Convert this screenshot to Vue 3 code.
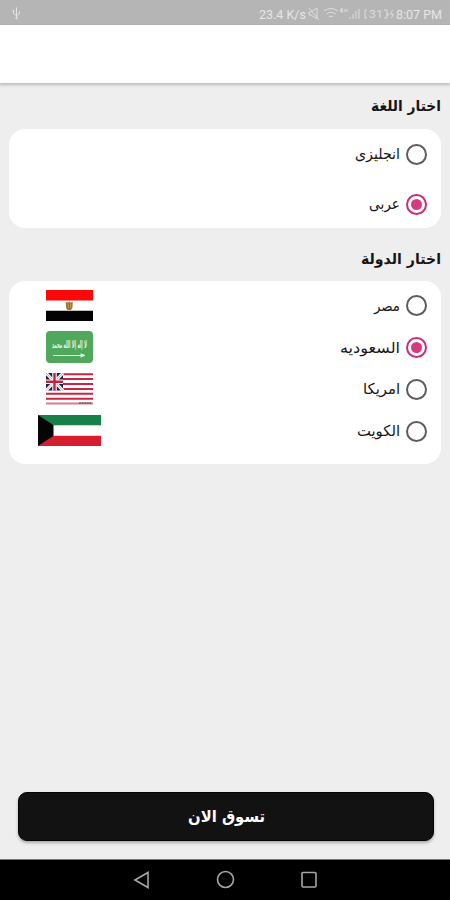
<script setup>
import { ref } from 'vue'

const language = ref('ar')
const country = ref('sa')
const languages = [
  { id: 'en', label: 'انجليزى', width: 45 },
  { id: 'ar', label: 'عربى', width: 31 },
]
const countries = [
  { id: 'eg', label: 'مصر', width: 26 },
  { id: 'sa', label: 'السعوديه', width: 60 },
  { id: 'us', label: 'امريكا', width: 37 },
  { id: 'kw', label: 'الكويت', width: 43 },
]
</script>

<template>
  <div class="screen" dir="rtl">
    <header class="status" dir="ltr">
      <svg class="usb" width="12" height="14" viewBox="0 0 12 14">
        <path d="M6.500 1.500v11M3.500 5v2.500l3 2 3-2V5.500" />
        <circle cx="6.500" cy="12" r=".8" /><circle cx="3.500" cy="5" r=".7" />
      </svg>
      <svg class="status-info" width="184" height="20" viewBox="0 0 184 20">
        <text x="1" y="16" textLength="47" lengthAdjust="spacingAndGlyphs">23.4 K/s</text>
        <g class="line">
          <path d="M51 9h2l6-4v11l-6-4h-2zM51 5l10 12" />
          <path d="M66 8q7-5 14 0M68.500 11q4.500-3.500 9 0M71 14q2-2 4 0" />
          <path d="M84 5l-2 3h3M84 5v5M87 6v3M89 6v3" />
          <path d="M92 16v-2M95 16v-5M98 16v-8M101 16v-10" />
          <path d="M109 7h-2v8h2M126 7h3v8h-3M130 10v3M134.500 7l-2 4h3l-2 4" />
        </g>
        <text class="battery" x="111" y="15" textLength="14" lengthAdjust="spacingAndGlyphs">31</text>
        <text x="138" y="16" textLength="46" lengthAdjust="spacingAndGlyphs">8:07 PM</text>
      </svg>
    </header>
    <div class="appbar"></div>

    <main class="content">
      <h2>
        <svg width="70" height="30"><text x="35" y="20" textLength="70" lengthAdjust="spacingAndGlyphs">اختار اللغة</text></svg>
      </h2>
      <section class="card languages">
        <div v-for="item in languages" :key="item.id" class="row" @click="language = item.id">
          <span class="radio" :class="{ selected: language === item.id }"></span>
          <svg class="label" :width="item.width" height="30">
            <text :x="item.width / 2" y="20" :textLength="item.width" lengthAdjust="spacingAndGlyphs">{{ item.label }}</text>
          </svg>
        </div>
      </section>

      <h2 class="country-title">
        <svg width="80" height="30"><text x="40" y="20" textLength="80" lengthAdjust="spacingAndGlyphs">اختار الدولة</text></svg>
      </h2>
      <section class="card countries">
        <div v-for="item in countries" :key="item.id" class="row" @click="country = item.id">
          <span class="radio" :class="{ selected: country === item.id }"></span>
          <svg class="label" :width="item.width" height="30">
            <text :x="item.width / 2" y="20" :textLength="item.width" lengthAdjust="spacingAndGlyphs">{{ item.label }}</text>
          </svg>
          <div class="flag">
            <svg v-if="item.id === 'eg'" width="47" height="31" viewBox="0 0 47 31">
              <path fill="#fff" d="M0 0h47v31H0z" />
              <path fill="#fd0808" d="M0 0h47v10.500H0z" />
              <path fill="#030303" d="M0 20.700h47V31H0z" />
              <path fill="#a5782c" d="M19.800 12l2.500.6 1-1.400 1 1.400 2.500-.6-.4 6-1.400 2h-3.500l-1.400-2z" />
              <path fill="#e0bd74" d="M22 14h2.500v4H22z" />
              <path fill="#59411e" d="M22.700 14h1v4h-1z" />
            </svg>
            <svg v-else-if="item.id === 'sa'" width="47" height="32" viewBox="0 0 47 32">
              <rect width="47" height="32" rx="4" fill="#4fa85c" />
              <text class="script" x="23.500" y="17" textLength="35" lengthAdjust="spacingAndGlyphs">لا إله إلا الله محمد</text>
              <path d="M7 24.500h31M35 22.500v4M35 23l4 1.500-4 1" stroke="#e2f2e4" fill="none" />
            </svg>
            <svg v-else-if="item.id === 'us'" width="47" height="32" viewBox="0 0 47 32">
              <path fill="#fff" d="M0 0h47v32H0z" />
              <path stroke="#c82644" stroke-width="2" d="M0 1.200h47M0 6.100h47M0 11h47M0 15.900h47M0 20.800h47M0 25.700h47" />
              <path stroke="#d87b8d" stroke-width="2" d="M0 30.600h47" />
              <path fill="#202448" d="M0 0h17v17.500H0z" />
              <path stroke="#fff" stroke-width="3" d="M0 0l17 17.500M17 0L0 17.500" />
              <path stroke="#d46b80" stroke-width=".7" d="M0 0l17 17.500M17 0L0 17.500" />
              <path stroke="#fff" stroke-width="4.500" d="M8.500 0v17.500M0 8.800h17" />
              <path stroke="#c51f3d" stroke-width="2.400" d="M8.500 0v17.500M0 8.800h17" />
              <path stroke="#4b3038" d="M33 30h13" stroke-dasharray="2 .6" />
            </svg>
            <svg v-else width="63" height="31" viewBox="0 0 63 31">
              <path fill="#fff" d="M0 0h63v31H0z" />
              <path fill="#168048" d="M0 0h63v10.300H0z" />
              <path fill="#d71e31" d="M0 20.700h63V31H0z" />
              <path fill="#050505" d="M0 0l15.500 10.300v10.400L0 31z" />
            </svg>
          </div>
        </div>
      </section>
    </main>

    <button class="shop">
      <svg width="77" height="34"><text x="38.500" y="22" textLength="77" lengthAdjust="spacingAndGlyphs">تسوق الان</text></svg>
    </button>
    <nav class="navigation" dir="ltr">
      <svg width="18" height="18"><path d="M16 1.500v15L3 9z" /></svg>
      <svg width="18" height="18"><circle cx="9.500" cy="8.500" r="8" /></svg>
      <svg width="18" height="18"><rect x="2" y="1.500" width="14" height="14.500" rx="1" /></svg>
    </nav>
  </div>
</template>

<style>
body { margin: 0; }
</style>

<style scoped>
.screen {
  width: 450px;
  height: 900px;
  display: flex;
  flex-direction: column;
  overflow: hidden;
  background: #eee;
  color: #161616;
  font-family: "DejaVu Sans", "Noto Sans", sans-serif;
}
svg { display: block; overflow: visible; flex: none; }
.status {
  box-sizing: border-box;
  height: 25px;
  flex: none;
  padding: 1px 8px 0 10px;
  display: flex;
  align-items: center;
  justify-content: space-between;
  background: #b5b5b5;
  border-bottom: 1px solid #adadad;
}
.usb { fill: none; stroke: #e5e5e5; stroke-width: 1; }
.status-info { font: 12px Roboto, sans-serif; }
.line { fill: none; stroke: #dedede; stroke-width: 1; }
.appbar {
  height: 58px;
  flex: none;
  background: #fff;
  box-shadow: 0 1px 3px 1px #bbb;
}
.content { flex: 1; padding: 8px 9px 0; }
h2 { margin: 0; height: 38px; font-size: 15px; font-weight: 700; }
.country-title { margin-top: 16px; height: 37px; }
text { text-anchor: middle; fill: currentColor; }
.status-info text { text-anchor: start; fill: #e6e6e6; }
.status-info .battery { font-size: 10px; fill: #dcdcdc; }
.card { background: #fff; border-radius: 16px; }
.languages { height: 99px; }
.countries { box-sizing: border-box; height: 183px; padding: 4px 0 12px; }
.row { display: flex; align-items: center; padding-right: 14px; cursor: pointer; }
.languages .row { height: 50px; }
.countries .row { height: 41.75px; }
.radio {
  box-sizing: border-box;
  width: 21px;
  height: 21px;
  margin-left: 6px;
  display: grid;
  place-items: center;
  border: 1.5px solid #5c5c5c;
  border-width: 2px;
  border-radius: 50%;
}
.radio.selected { border-color: #c92f72; }
.radio.selected::after {
  content: "";
  width: 11px;
  height: 11px;
  border-radius: 50%;
  background: #d43c80;
}
.label { font-size: 15px; }
.flag { width: 63px; margin: -1px auto 0 29px; display: flex; justify-content: center; }
.script { font-size: 10px; font-weight: 700; fill: #e2f2e4; }
.shop {
  width: 416px;
  height: 49px;
  flex: none;
  margin: 0 16px 18px 0;
  padding: 0;
  display: flex;
  align-items: center;
  justify-content: center;
  border: 1px solid #050505;
  border-radius: 9px;
  background: #121212;
  color: #fff;
  box-shadow: 0 2px 3px #aaa;
  font: 700 16px "DejaVu Sans", sans-serif;
}
.navigation {
  box-sizing: border-box;
  height: 41px;
  flex: none;
  display: flex;
  align-items: center;
  justify-content: center;
  gap: 66px;
  background: #000;
  border-top: 1px solid #777;
}
.navigation svg { fill: none; stroke: #a6a6a6; stroke-width: 1.6; }
</style>
